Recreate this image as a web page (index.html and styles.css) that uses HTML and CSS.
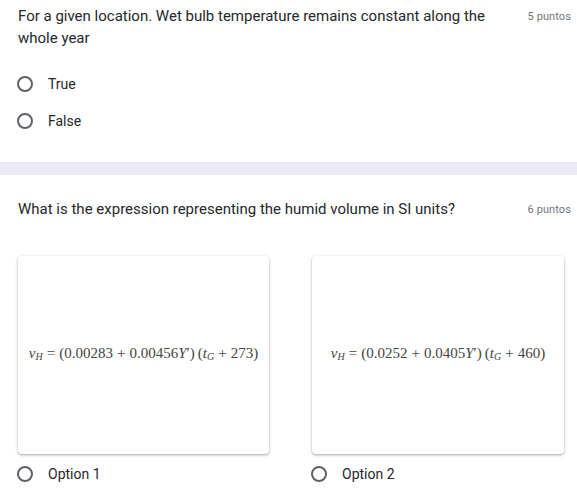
FILE: index.html
```html
<!DOCTYPE html>
<html>
<head>
<meta charset="utf-8">
<link rel="stylesheet" href="styles.css">
</head>
<body>
<section class="q q1">
  <div class="head">
    <div class="title">For a given location. Wet bulb temperature remains constant along the whole year</div>
    <div class="pts">5 puntos</div>
  </div>
  <div class="opts">
    <label class="opt"><span class="radio"></span><span class="lbl">True</span></label>
    <label class="opt"><span class="radio"></span><span class="lbl">False</span></label>
  </div>
</section>
<div class="band"></div>
<section class="q q2">
  <div class="head">
    <div class="title">What is the expression representing the humid volume in SI units?</div>
    <div class="pts">6 puntos</div>
  </div>
  <div class="grid">
    <div class="choice">
      <div class="card">
        <div class="eq"><i>v</i><sub><i>H</i></sub><span class="op">=</span>(0.00283<span class="op">+</span>0.00456<i>Y</i>′)<span class="sp"></span>(<i>t</i><sub><i>G</i></sub><span class="op">+</span>273)</div>
      </div>
      <label class="opt small"><span class="radio"></span><span class="lbl">Option 1</span></label>
    </div>
    <div class="choice">
      <div class="card">
        <div class="eq"><i>v</i><sub><i>H</i></sub><span class="op">=</span>(0.0252<span class="op">+</span>0.0405<i>Y</i>′)<span class="sp"></span>(<i>t</i><sub><i>G</i></sub><span class="op">+</span>460)</div>
      </div>
      <label class="opt small"><span class="radio"></span><span class="lbl">Option 2</span></label>
    </div>
  </div>
</section>
</body>
</html>
```
FILE: styles.css
```css
html, body {
  margin: 0;
  padding: 0;
  background: #ffffff;
}
body {
  font-family: Roboto, "Liberation Sans", Arial, sans-serif;
  color: #26282b;
  width: 577px;
  overflow: hidden;
}
.q {
  padding-left: 18px;
  padding-right: 6px;
}
.q1 {
  padding-top: 5px;
}
.head {
  display: flex;
  justify-content: space-between;
  align-items: flex-start;
}
.title {
  font-size: 15px;
  line-height: 22px;
  width: 500px;
}
.pts {
  font-size: 11px;
  line-height: 22px;
  color: #70757a;
  letter-spacing: 0.1px;
  margin-top: 1px;
}
.opts {
  margin-top: 16px;
}
.opt {
  display: flex;
  align-items: center;
  height: 37px;
  font-size: 14px;
}
.radio {
  width: 12px;
  height: 12px;
  border: 2px solid #5f6368;
  border-radius: 50%;
  margin-left: -1px;
  flex: none;
}
.lbl {
  margin-left: 15px;
  color: #26282b;
}
.band {
  margin-top: 23px;
  height: 13px;
  background: #ebe9f6;
  border-top: 1px solid #e3e2ee;
  box-sizing: border-box;
}
.q2 {
  padding-top: 23px;
}
.grid {
  margin-top: 35px;
  display: grid;
  grid-template-columns: 251px 252px;
  column-gap: 43px;
}
.card {
  height: 198px;
  background: #fff;
  border-radius: 4px;
  box-shadow: 0 1px 2px 0 rgba(60,64,67,.3), 0 1px 3px 1px rgba(60,64,67,.12);
  display: flex;
  align-items: center;
  justify-content: center;
}
.eq {
  font-family: "Liberation Serif", "Times New Roman", serif;
  font-size: 15px;
  color: #444;
  white-space: nowrap;
  margin-top: -3px;
}
.eq sub {
  font-size: 10px;
  vertical-align: -2px;
  line-height: 0;
}
.op {
  margin: 0 4px;
}
.sp {
  display: inline-block;
  width: 3px;
}
.opt.small {
  height: 20px;
  margin-top: 10px;
}
```
